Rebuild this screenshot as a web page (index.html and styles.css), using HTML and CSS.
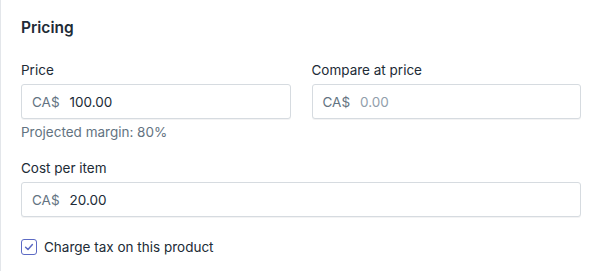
FILE: index.html
```html
<!DOCTYPE html>
<html lang="en">
<head>
  <meta charset="UTF-8" />
  <title>Pricing</title>
  <link rel="stylesheet" href="styles.css">
</head>
<body>
  <div class="card">
    <h2 class="card-title">Pricing</h2>

    <div class="row">
      <div class="field">
        <label class="label">Price</label>
        <div class="input">
          <span class="prefix">CA$</span>
          <span class="value">100.00</span>
        </div>
        <div class="help">Projected margin: 80%</div>
      </div>
      <div class="field">
        <label class="label">Compare at price</label>
        <div class="input">
          <span class="prefix">CA$</span>
          <span class="value placeholder">0.00</span>
        </div>
      </div>
    </div>

    <div class="field cost">
      <label class="label">Cost per item</label>
      <div class="input">
        <span class="prefix">CA$</span>
        <span class="value">20.00</span>
      </div>
    </div>

    <label class="checkbox">
      <span class="box">
        <svg width="10" height="10" viewBox="0 0 10 10">
          <path d="M1.6 5.2 L4 7.5 L8.4 2.6" fill="none" stroke="#5c6ac4" stroke-width="1.5" stroke-linecap="round" stroke-linejoin="round"/>
        </svg>
      </span>
      Charge tax on this product
    </label>
  </div>
</body>
</html>
```

FILE: styles.css
```css
* {
  box-sizing: border-box;
}

body {
  margin: 0;
  background-color: #fff;
  color: #212b36;
  font-family: 'Inter', 'Liberation Sans', Arial, sans-serif;
  font-size: 13.5px;
  line-height: 20px;
}

.card {
  border-left: 1px solid #e3e6ea;
  padding: 16px 17px 14px 20px;
  min-height: 271px;
}

.card-title {
  margin: 0 0 20px;
  font-size: 15.5px;
  line-height: 24px;
  font-weight: 600;
}

.row {
  display: grid;
  grid-template-columns: 1fr 1fr;
  gap: 21px;
}

.label {
  display: block;
  margin-bottom: 4px;
}

.input {
  display: flex;
  align-items: center;
  height: 35px;
  padding: 0 10px;
  border: 1px solid #d6dbe0;
  border-radius: 3px;
  background-color: #fff;
  box-shadow: 0 1px 0 rgba(22, 29, 37, 0.05);
}

.prefix {
  color: #637381;
  margin-right: 10px;
}

.placeholder {
  color: #919eab;
}

.help {
  margin-top: 3px;
  color: #637381;
}

.cost {
  margin-top: 16px;
}

.checkbox {
  display: flex;
  align-items: center;
  gap: 7px;
  margin-top: 20px;
  cursor: pointer;
}

.box {
  display: flex;
  align-items: center;
  justify-content: center;
  width: 16px;
  height: 16px;
  border: 1px solid #5c6ac4;
  border-radius: 3px;
  background-color: #fff;
}
```
